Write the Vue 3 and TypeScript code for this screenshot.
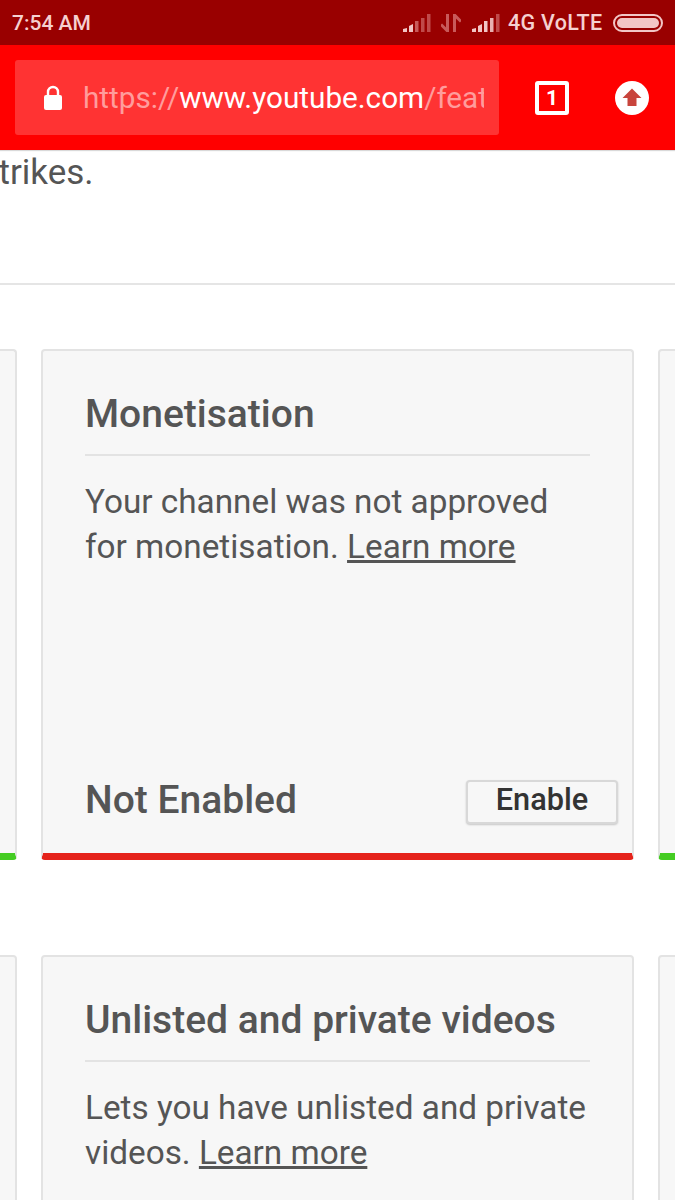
<template>
  <div class="screen">
    <header class="browser-top">
      <div class="status-bar">
        <span class="time">7:54 AM</span>
        <div class="status-right">
          <svg width="28" height="18" viewBox="0 0 28 18">
            <path d="M0 18V15L4 14V18Z" fill="#f2c6c6" />
            <path d="M6 18V12L10 10V18Z" fill="#f2c6c6" />
            <rect x="12" y="7" width="3.5" height="11" fill="#c85a5a" />
            <rect x="18" y="4" width="3.5" height="14" fill="#c04a4a" />
            <rect x="24" y="0" width="3.5" height="18" fill="#c04a4a" />
          </svg>
          <svg class="data" width="20" height="18" viewBox="0 0 20 18">
            <path d="M6.5 0V17L0 10.5M13.5 18V1L20 7.5" fill="none" stroke="#c85a5a" stroke-width="3" />
          </svg>
          <svg width="28" height="18" viewBox="0 0 28 18">
            <path d="M0 18V15L4 14V18Z" fill="#f2c6c6" />
            <path d="M6 18V12L10 10V18Z" fill="#f2c6c6" />
            <rect x="12" y="7" width="3.5" height="11" fill="#f2c6c6" />
            <rect x="18" y="4" width="3.5" height="14" fill="#e8b0b0" />
            <rect x="24" y="0" width="3.5" height="18" fill="#c04a4a" />
          </svg>
          <span class="network">4G VoLTE</span>
          <div class="battery"><div class="battery-fill"></div></div>
        </div>
      </div>
      <div class="toolbar">
        <div class="omnibox">
          <svg class="lock" width="20" height="26" viewBox="0 0 20 26">
            <path d="M5 10V7a5 5 0 0 1 10 0v3" fill="none" stroke="#fff" stroke-width="2.4" />
            <rect x="1" y="10" width="18" height="15" rx="2" fill="#fff" />
          </svg>
          <div class="url"><span class="dim">https://</span>www.youtube.com<span class="dim">/features</span></div>
        </div>
        <div class="tabs">1</div>
        <div class="upload">
          <svg width="34" height="34" viewBox="0 0 34 34">
            <circle cx="17" cy="17" r="17" fill="#fff" />
            <path d="M17 7.5 L26.5 17 H21.5 V25 H12.5 V17 H7.5 Z" fill="#c8443c" />
          </svg>
        </div>
      </div>
    </header>

    <p class="cut-text">trikes.</p>
    <hr class="section-line" />

    <div v-for="row in rows" :key="row.title" class="card-row" :class="{ last: !row.status }">
      <div class="card side" :class="{ ok: row.status }"></div>
      <div class="card main" :class="{ off: row.status }">
        <h2 class="card-title">{{ row.title }}</h2>
        <p class="card-text">{{ row.text }} <a class="learn">Learn more</a></p>
        <div v-if="row.status" class="card-foot">
          <span class="state">{{ row.status }}</span>
          <button class="enable">Enable</button>
        </div>
      </div>
      <div class="card side" :class="{ ok: row.status }"></div>
    </div>
  </div>
</template>

<script setup lang="ts">
interface FeatureRow {
  title: string;
  text: string;
  status?: string;
}

const rows: FeatureRow[] = [
  {
    title: 'Monetisation',
    text: 'Your channel was not approved for monetisation.',
    status: 'Not Enabled',
  },
  {
    title: 'Unlisted and private videos',
    text: 'Lets you have unlisted and private videos.',
  },
];
</script>

<style>
html,
body {
  margin: 0;
  background: #fff;
}
</style>

<style scoped>
.screen {
  width: 675px;
  height: 1200px;
  overflow: hidden;
  background: #fff;
  font-family: Roboto, "Liberation Sans", sans-serif;
  color: #555;
}

.status-bar {
  height: 45px;
  background: #990000;
  display: flex;
  justify-content: space-between;
  align-items: center;
  padding: 0 12px;
  color: #f5d0d0;
  font-size: 21px;
  font-weight: 500;
  box-sizing: border-box;
}

.status-right {
  display: flex;
  align-items: center;
}

.status-right svg {
  flex: none;
}

.data {
  margin: 0 11px 0 10px;
}

.network {
  margin-left: 8px;
  width: 95px;
  white-space: nowrap;
  font-size: 21.5px;
  letter-spacing: 0.3px;
}

.battery {
  width: 50px;
  height: 18px;
  margin-left: 10px;
  border: 2px solid #f2c6c6;
  border-radius: 9px;
  box-sizing: border-box;
  padding: 2px;
}

.battery-fill {
  height: 100%;
  background: #f2c6c6;
  border-radius: 5px;
}

.toolbar {
  height: 105px;
  background: #ff0000;
  display: flex;
  align-items: center;
  padding-left: 15px;
  box-sizing: border-box;
  box-shadow: 0 1px 1px rgba(0, 0, 0, 0.15);
}

.omnibox {
  width: 484px;
  height: 75px;
  background: #ff3333;
  border-radius: 3px;
  display: flex;
  align-items: center;
  padding: 0 15px 0 28px;
  box-sizing: border-box;
}

.lock {
  flex: none;
  margin-right: 20px;
}

.url {
  overflow: hidden;
  white-space: nowrap;
  font-size: 29.7px;
  color: #fff;
}

.dim {
  color: #ff9c9c;
}

.tabs {
  width: 34px;
  height: 34px;
  margin-left: 36px;
  border: 4px solid #fff;
  border-radius: 3px;
  box-sizing: border-box;
  display: flex;
  align-items: center;
  justify-content: center;
  color: #fff;
  font-size: 21px;
  font-weight: 700;
}

.upload {
  margin-left: 46px;
  height: 34px;
}

.cut-text {
  margin: 0 0 0 -1.5px;
  height: 133px;
  font-size: 35px;
  line-height: 46px;
}

.section-line {
  margin: 0 0 64px;
  border: 0;
  height: 2px;
  background: #e5e5e5;
}

.card-row {
  display: flex;
  justify-content: center;
  gap: 24px;
  height: 511px;
  margin-bottom: 95px;
}

.card-row.last {
  height: 400px;
  margin-bottom: 0;
}

.card {
  flex: none;
  width: 593px;
  box-sizing: border-box;
  background: #f7f7f7;
  border: 2px solid #e3e3e3;
  border-radius: 4px;
}

.card.ok {
  border-bottom: 7px solid #44cc22;
}

.card.off {
  border-bottom: 7px solid #e5231b;
}

.main {
  display: flex;
  flex-direction: column;
  padding: 0 42px;
}

.card-title {
  margin: 0;
  padding: 41px 0 18px;
  font-size: 39px;
  line-height: 44px;
  font-weight: 500;
  border-bottom: 2px solid #e3e3e3;
}

.card-text {
  margin: 23px 0 0;
  font-size: 33.3px;
  line-height: 45px;
}

.learn {
  text-decoration: underline;
}

.card-foot {
  margin-top: auto;
  margin-right: -28px;
  padding-bottom: 29px;
  display: flex;
  justify-content: space-between;
  align-items: flex-start;
}

.state {
  font-size: 39px;
  font-weight: 500;
  line-height: 40px;
}

.enable {
  width: 152px;
  height: 44px;
  padding: 0 0 6px;
  background: #f7f7f7;
  border: 2px solid #d8d8d8;
  border-radius: 4px;
  box-shadow: 0 1px 2px rgba(0, 0, 0, 0.2);
  font-family: inherit;
  font-size: 30.7px;
  font-weight: 500;
  color: #333;
}
</style>
